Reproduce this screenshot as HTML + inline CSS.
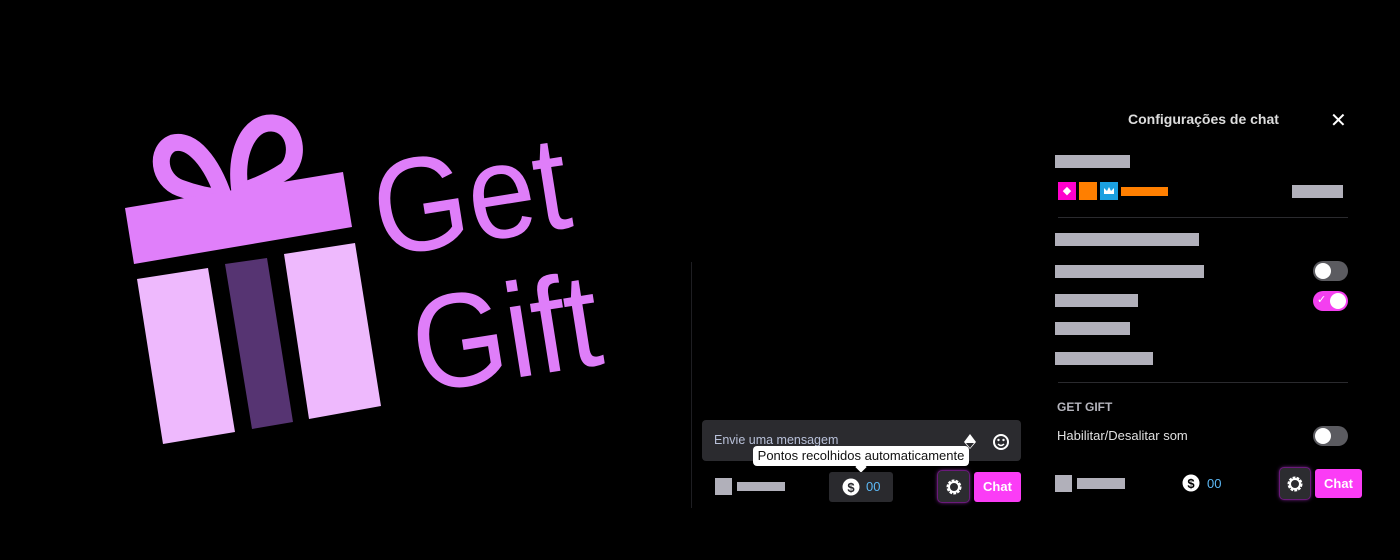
<!DOCTYPE html>
<html><head><meta charset="utf-8"><style>
*{margin:0;padding:0;box-sizing:border-box}
body{width:1400px;height:560px;background:#000;position:relative;overflow:hidden;font-family:"Liberation Sans",sans-serif}
.a{position:absolute}
.bar{position:absolute;background:#b1b0ba}
.tog{position:absolute;width:35px;height:20px;border-radius:10px;background:#5b5b60}
.tog::after{content:"";position:absolute;top:2px;left:2px;width:16px;height:16px;border-radius:50%;background:#fff}
.tog.on{background:#f43ff0}
.tog.on::after{left:17px}
.gear{position:absolute;background:#2c2c30;border-radius:4px;box-shadow:0 0 0 1px #6a1a7a,0 0 4px #b030d0}
.chat{position:absolute;background:#fb3cf6;color:#fff;font-weight:bold;font-size:13px;border-radius:3px;text-align:center}
</style></head><body>
<svg class="a" style="left:0;top:0" width="700" height="560">
 <g fill="none" stroke="#e07ffa" stroke-width="17" stroke-linejoin="round">
  <path d="M224,198 C212,162 192,138 173,143 C155,150 158,180 180,188 C196,194 210,197 224,198Z"/>
  <path d="M240,192 C234,150 250,122 272,123 C298,125 300,160 285,171 C270,181 255,187 240,192Z"/>
 </g>
 <polygon points="125,208 343,172 352,227 134,264" fill="#e07ffa"/>
 <polygon points="137,279 208,268 235,432 163,444" fill="#eeb9fd"/>
 <polygon points="225,264 267,258 293,422 252,429" fill="#563472"/>
 <polygon points="284,254 355,243 381,406 309,419" fill="#eeb9fd"/>
 <g fill="#df7ef9" font-family="Liberation Sans, sans-serif" font-size="134">
  <text x="381" y="257" transform="rotate(-9 381 257)" textLength="196" lengthAdjust="spacingAndGlyphs">Get</text>
  <text x="420" y="393" transform="rotate(-9 420 393)" textLength="188" lengthAdjust="spacingAndGlyphs">Gift</text>
 </g>
</svg>
<div class="a" style="left:691px;top:262px;width:1px;height:246px;background:#1e1e22"></div>
<div class="a" style="left:702px;top:420px;width:319px;height:41px;background:#2b2b2f;border-radius:4px"></div>
<div class="a" style="left:714px;top:433px;font-size:12.5px;color:#b8c0d8">Envie uma mensagem</div>
<svg class="a" style="left:960px;top:431px" width="60" height="22">
 <path d="M10 3 L16 11 L10 18 L4 11 Z" fill="#fff"/><path d="M6 12 L14 12 L10 17Z" fill="#2b2b2f"/>
 <circle cx="41" cy="11" r="7" fill="none" stroke="#fff" stroke-width="2"/><circle cx="38.5" cy="9" r="1.2" fill="#fff"/><circle cx="43.5" cy="9" r="1.2" fill="#fff"/><path d="M38 13 Q41 16 44 13" stroke="#fff" stroke-width="1.5" fill="none"/>
</svg>
<div class="a" style="left:753px;top:446px;width:216px;height:20px;background:#fff;border-radius:4px;font-size:13px;color:#111;line-height:20px;text-align:center">Pontos recolhidos automaticamente</div>
<div class="a" style="left:857px;top:463px;width:8px;height:8px;background:#fff;transform:rotate(45deg)"></div>
<div class="bar" style="left:715px;top:478px;width:17px;height:17px"></div>
<div class="bar" style="left:737px;top:482px;width:48px;height:9px"></div>
<div class="a" style="left:829px;top:472px;width:64px;height:30px;background:#2a2a2e;border-radius:3px"></div>
<svg class="a" style="left:842px;top:478px" width="18" height="18"><circle cx="9" cy="9" r="8.5" fill="#fff"/><text x="9" y="14" text-anchor="middle" font-size="13" font-weight="bold" fill="#2a2a2e" font-family="Liberation Sans">$</text></svg>
<div class="a" style="left:866px;top:479px;font-size:13px;color:#5cb8f5">00</div>
<div class="gear" style="left:938px;top:471px;width:31px;height:31px"></div>
<svg class="a" style="left:944px;top:477px" width="20" height="20"><circle cx="10" cy="10" r="6" fill="none" stroke="#fff" stroke-width="3" stroke-dasharray="2.6 1.1"/><circle cx="10" cy="10" r="5" fill="none" stroke="#fff" stroke-width="2"/></svg>
<div class="chat" style="left:974px;top:472px;width:47px;height:30px;line-height:30px">Chat</div>

<div class="a" style="left:1128px;top:111px;font-size:14px;font-weight:bold;color:#ddd">Configurações de chat</div>
<div class="a" style="left:1330px;top:108px;font-size:20px;color:#fff">✕</div>
<div class="bar" style="left:1055px;top:155px;width:75px;height:13px"></div>
<div class="a" style="left:1058px;top:182px;width:18px;height:18px;background:#f0c;color:#fff;font-size:11px;text-align:center;line-height:18px">◆</div>
<div class="a" style="left:1079px;top:182px;width:18px;height:18px;background:#ff7f00"></div>
<div class="a" style="left:1100px;top:182px;width:18px;height:18px;background:#1ba0e0"><svg width="18" height="18"><path d="M4 12 L4 6 L7 9 L9 5 L11 9 L14 6 L14 12Z" fill="#fff"/></svg></div>
<div class="a" style="left:1121px;top:187px;width:47px;height:9px;background:#ff7f00"></div>
<div class="bar" style="left:1292px;top:185px;width:51px;height:13px"></div>
<div class="a" style="left:1058px;top:217px;width:290px;height:1px;background:#2a2a2e"></div>
<div class="bar" style="left:1055px;top:233px;width:144px;height:13px"></div>
<div class="bar" style="left:1055px;top:265px;width:149px;height:13px"></div>
<div class="tog" style="left:1313px;top:261px"></div>
<div class="bar" style="left:1055px;top:294px;width:83px;height:13px"></div>
<div class="tog on" style="left:1313px;top:291px"><span style="position:absolute;left:4px;top:2px;color:#fff;font-size:11px">✓</span></div>
<div class="bar" style="left:1055px;top:322px;width:75px;height:13px"></div>
<div class="bar" style="left:1055px;top:352px;width:98px;height:13px"></div>
<div class="a" style="left:1058px;top:382px;width:290px;height:1px;background:#2a2a2e"></div>
<div class="a" style="left:1057px;top:400px;font-size:12px;font-weight:bold;color:#b5b5bd">GET GIFT</div>
<div class="a" style="left:1057px;top:428px;font-size:13px;color:#e0e0e0">Habilitar/Desalitar som</div>
<div class="tog" style="left:1313px;top:426px"></div>
<div class="bar" style="left:1055px;top:475px;width:17px;height:17px"></div>
<div class="bar" style="left:1077px;top:478px;width:48px;height:11px"></div>
<svg class="a" style="left:1182px;top:474px" width="18" height="18"><circle cx="9" cy="9" r="8.5" fill="#fff"/><text x="9" y="14" text-anchor="middle" font-size="13" font-weight="bold" fill="#000" font-family="Liberation Sans">$</text></svg>
<div class="a" style="left:1207px;top:476px;font-size:13px;color:#5cb8f5">00</div>
<div class="gear" style="left:1280px;top:468px;width:30px;height:31px"></div>
<svg class="a" style="left:1285px;top:474px" width="20" height="20"><circle cx="10" cy="10" r="6" fill="none" stroke="#fff" stroke-width="3" stroke-dasharray="2.6 1.1"/><circle cx="10" cy="10" r="5" fill="none" stroke="#fff" stroke-width="2"/></svg>
<div class="chat" style="left:1315px;top:469px;width:47px;height:29px;line-height:29px">Chat</div>
</body></html>
